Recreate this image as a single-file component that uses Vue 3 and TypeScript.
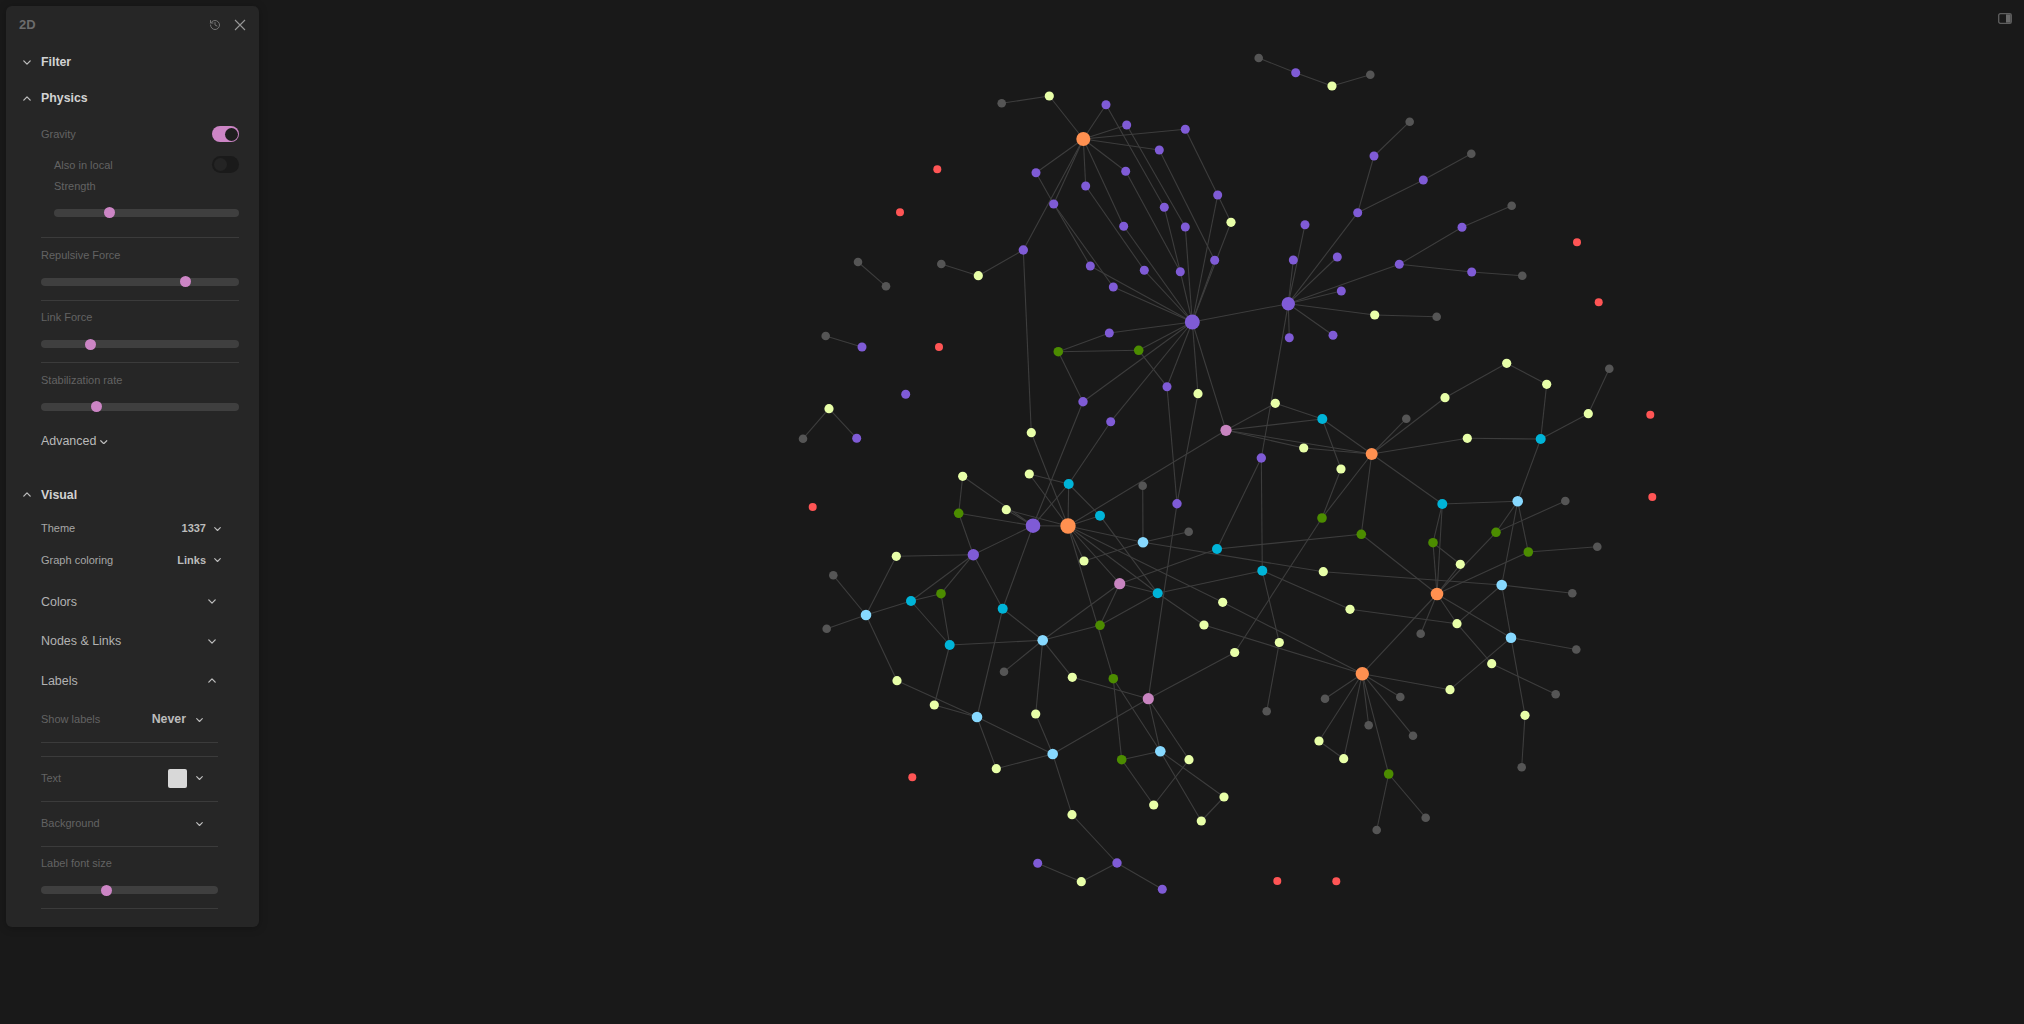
<script setup lang="ts">
interface GNode { id: string; x: number; y: number; r: number; fill: string }
interface GEdge { x1: number; y1: number; x2: number; y2: number }

const fills: Record<string, [string, number]> = {
  p: ['#7f5bd6', 4.5],
  g: ['#555555', 4.3],
  y: ['#e8ffa8', 4.6],
  r: ['#ff5555', 4],
  c: ['#00b4d8', 5],
  l: ['#87d9ff', 5.3],
  v: ['#4c8c00', 4.8],
  m: ['#c884c0', 5.6],
  o: ['#ff9050', 6.5]
}

const nodeTable = `
g1002 1001.7 103.3|y1049 1049.3 96|p1106 1106 104.7|p1127 1126.7 125|p1185 1185.3 129.3|o1083 1083.3 139 7
p1159 1159.3 150|p1036 1036 172.7|p1126 1125.7 171.3|p1086 1085.7 186|p1054 1053.7 204 4.6|p1164 1164.3 207.3
p1186 1185.3 227|p1124 1123.7 226.3|p1023 1023.3 250 4.7|g941 941.3 264|y978 978.3 275.7|g858 858 262|g886 886 286.3
p1090 1090.3 266|p1144 1144.3 270.3|p1180 1180.3 271.7|p1113 1113.3 287|p1192 1192.3 322 7.5|p1109 1109.3 333
v1058 1058.3 351.7|v1139 1138.7 350.3|g826 825.7 336|p862 862 347|r937 937.3 169.3|r900 900 212.3|r939 939 347
g1259 1258.7 58|p1296 1295.7 72.7|y1332 1332 86|g1370 1370.3 74.7|g1410 1409.7 121.7|p1374 1374 156|g1471 1471.3 153.7
p1423 1423.3 180|p1358 1357.7 212.7|p1218 1217.7 195|y1231 1231 222.3|p1305 1305 224.7|g1512 1511.7 205.7|p1462 1462 227.3
r1577 1577 242.3|p1215 1214.7 260.3|p1293 1293.3 260|p1337 1337.3 257|p1399 1399.3 264.3|p1472 1471.7 272|g1522 1522.3 275.7
p1341 1341.3 291|p1288 1288.3 303.7 6.7|y1375 1374.7 315|g1437 1436.7 316.7|r1599 1598.7 302.3|p1289 1289.3 337.7|p1333 1333 335.3
p906 905.7 394.3|y829 829 408.7|g803 803 438.7|p857 856.7 438.3|p1167 1167 386.7|y1198 1198 393.7|p1083 1083 401.7 4.7|p1111 1110.7 421.7
y1031 1031.3 432.7|y963 962.7 476.3|y1029 1029.3 474|c1069 1068.7 484|g1143 1142.7 485.7|p1177 1177 503.7 4.7|r813 812.7 507
y1006 1006.3 509.7|v959 958.7 513.3|c1100 1100 515.7|p1033 1033 525.7 7.3|o1068 1068 526 7.7|g1189 1188.7 531.7|l1143 1143 542.3
p973 973.3 554.7 5.7|y896 896.3 556.3|y1084 1084 561|g833 833.3 575.3|m1120 1119.7 583.7|c1158 1157.7 593.3|v941 941 593.7|c911 911 601
c1003 1002.7 608.7|l866 866 615|v1100 1100 625.3|g827 826.7 628.7|l1043 1042.7 640.3|c950 949.7 645
y1507 1506.7 363.3|g1609 1609.3 368.7|y1547 1546.7 384.3|y1445 1445 397.7|y1275 1275.3 403.3|y1588 1588.3 413.7|r1650 1650.3 414.7
g1406 1406.3 418.7|c1322 1322.3 419|m1226 1226 430.3|y1467 1467.3 438.3|c1541 1540.7 439|y1304 1303.7 448|o1372 1371.7 454 6|p1261 1261.3 458 4.7
y1341 1341 469|r1652 1652.3 497|g1565 1565.3 501|l1518 1517.7 501.3|c1442 1442.3 504|v1322 1322 518|v1361 1361.3 534.3|v1496 1496 532.3
v1433 1433 542.7|g1597 1597.3 546.7|v1528 1528.3 552|y1460 1460.3 564.3|c1217 1217 549|c1262 1262.3 570.7|y1323 1323.3 571.7|l1502 1501.7 585
o1437 1437 594 6.3|g1572 1572.3 593.3|y1223 1222.7 602.3|y1350 1350 609.3|y1457 1457 623.7|y1204 1204 625|g1421 1420.7 633.7|l1511 1511 637.7
y1279 1279.3 642.5|y1235 1234.7 652.5|g1576 1576.3 649.5
g1004 1004 671.7|y1072 1072.3 677.3|y897 897 680.7|v1113 1113.3 678.7|m1148 1148.3 698.7|y934 934.3 705|l977 977 717|y1036 1035.7 714
l1053 1052.7 754|l1160 1160.3 751.3|v1122 1121.7 759.7|y1189 1189 759.7|y996 996.3 768.7|r912 912.3 777.3|y1154 1153.7 805|y1201 1201.3 821
y1071 1072 814.7|p1038 1037.7 863.3|p1117 1117 863 4.7|y1081 1081.3 881.7|p1162 1162.3 889.3
o1362 1362.3 673.7 6.7|y1492 1491.7 663.7|g1325 1325 698.7|g1400 1400.3 697|y1450 1450 689.7|g1556 1555.7 694.3|g1267 1266.7 711.3|y1525 1525 715.3
g1369 1368.7 725.3|g1413 1413 735.7|y1319 1319 741|y1344 1343.7 758.7|g1521 1521.7 767.3|v1389 1388.7 774|y1224 1224 797|g1426 1425.7 817.7
g1377 1376.7 830|r1277 1277.3 881|r1336 1336.3 881.3`

const edgeTable = `
g1002-y1049 y1049-o1083 o1083-p1106 o1083-p1127 o1083-p1185 o1083-p1159 o1083-p1036 o1083-p1126 o1083-p1086 o1083-p1054 o1083-p1023 o1083-p1124
p1106-p1164 p1127-p1186 p1185-p1218 p1159-p1215 p1036-p1054 p1126-p1180 p1086-p1144 p1054-p1090 p1054-p1113 p1164-p1180
p1186-p1192 p1124-p1192 p1090-p1192 p1144-p1192 p1180-p1192 p1113-p1192 p1109-p1192 v1058-p1109 v1058-v1139 v1139-p1192 v1058-p1083
p1023-y978 y978-g941 g858-g886 g826-p862 p1023-y1031 p1218-y1231 y1231-p1192 p1215-p1192 p1218-p1192
p1288-p1305 p1288-p1293 p1288-p1337 p1288-p1358 p1288-p1399 p1288-p1341 p1288-y1375 p1288-p1289 p1288-p1333 p1288-p1192 p1288-p1261
y1375-g1437 p1358-p1374 p1374-g1410 p1358-p1423 p1423-g1471 p1399-p1462 p1462-g1512 p1399-p1472 p1472-g1522
g1259-p1296 p1296-y1332 y1332-g1370
p1192-m1226 p1192-p1083 p1192-p1111 p1192-p1167 p1192-y1198 v1139-p1167 p1083-p1033 p1111-c1069 c1069-p1033
y1031-o1068 o1068-v1113 p1167-p1177 y1198-p1177 p1177-m1148 y963-v959 y963-p1033 y1006-o1068 y1006-p1033
y1029-c1069 y1029-o1068 c1069-o1068 c1069-c1100 c1100-c1158 o1068-c1100 o1068-p1033 v959-p1033 v959-p973 p1033-p973 p1033-c1003
p973-y896 p973-c911 p973-v941 p973-c1003 y896-l866 l866-g833 l866-g827 l866-c911 c911-v941 c911-c950 v941-c950 l866-y897
c950-l1043 c950-y934 c1003-l1043 c1003-l977 l1043-m1120 l1043-v1100 l1043-g1004 l1043-y1036 l1043-y1072 m1120-v1100 m1120-c1158 v1100-c1158
o1068-m1120 o1068-l1143 o1068-c1158 o1068-y1223 y1223-o1362 o1068-y1084 y1084-l1143 l1143-g1143 l1143-g1189 l1143-y1323 o1068-m1226
m1120-c1217 c1158-c1262 c1158-y1204 y1204-o1362 m1148-y1235 y1235-v1322
m1148-y1072 m1148-l1160 m1148-l1053 m1148-y1189 v1113-v1122 v1113-l1160 l1160-y1201 l1160-v1122 l1160-y1224 y1224-y1201 v1122-y1154 y1154-y1189
l977-y897 l977-y934 l977-l1053 l977-y996 y996-l1053 l1053-y1036 l1053-y1071 y1071-p1117 p1117-y1081 y1081-p1038 p1117-p1162
y1275-m1226 y1275-c1322 m1226-c1322 m1226-y1304 m1226-o1372 y1304-o1372 c1322-o1372 c1322-y1341 y1341-v1322 v1322-o1372 o1372-g1406 o1372-y1445
y1445-y1507 y1507-y1547 y1547-c1541 c1541-y1588 y1588-g1609 o1372-y1467 y1467-c1541 c1541-l1518 o1372-c1442 o1372-v1361
l1518-c1442 l1518-v1496 l1518-v1528 l1518-l1502 g1565-v1496 c1442-v1433 c1442-o1437 v1433-o1437 v1433-y1460 y1460-o1437 v1496-o1437 v1528-o1437
v1528-g1597 v1361-o1437 v1361-c1217 c1217-p1261 p1261-c1262 c1262-y1350 c1262-y1279 y1350-y1457 y1323-l1502 l1502-g1572 l1502-y1457 l1502-l1511
o1437-y1457 o1437-l1511 o1437-g1421 o1437-o1362 y1457-y1492 y1492-g1556 l1511-g1576 l1511-y1450 l1511-y1525 y1525-g1521 y1279-g1267
o1362-y1450 o1362-g1325 o1362-g1400 o1362-g1369 o1362-g1413 o1362-y1319 o1362-y1344 o1362-v1389 y1319-y1344 v1389-g1426 v1389-g1377
y829-g803 y829-p857`

const nodes: GNode[] = nodeTable
  .trim()
  .split(/[|\n]/)
  .map((row) => {
    const [id, x, y, r] = row.trim().split(' ')
    const [fill, size] = fills[id[0]]
    return { id, x: Number(x), y: Number(y), r: r ? Number(r) : size, fill }
  })

const byId = new Map(nodes.map((n) => [n.id, n]))

const edges: GEdge[] = edgeTable
  .trim()
  .split(/\s+/)
  .flatMap((pair) => {
    const [a, b] = pair.split('-')
    const from = byId.get(a)
    const to = byId.get(b)
    return from && to ? [{ x1: from.x, y1: from.y, x2: to.x, y2: to.y }] : []
  })

const sliders = {
  strength: 30,
  repulsive: 73,
  link: 25,
  stabilization: 28.1,
  labelSize: 37
}
</script>

<template>
  <div class="app">
    <svg class="graph" viewBox="0 0 2024 1024" width="2024" height="1024">
      <line v-for="(e, i) in edges" :key="i" :x1="e.x1" :y1="e.y1" :x2="e.x2" :y2="e.y2" class="edge" />
      <circle v-for="n in nodes" :key="n.id" :cx="n.x" :cy="n.y" :r="n.r" :fill="n.fill" />
    </svg>

    <svg class="sidebar-toggle" viewBox="0 0 14 11" width="14" height="11">
      <rect x="0.7" y="0.7" width="12.6" height="9.6" rx="1.6" class="sidebar-frame" />
      <rect x="8" y="1.4" width="4.6" height="8.2" class="sidebar-fill" />
    </svg>

    <aside class="panel">
      <header class="head">
        <span class="title">2D</span>
        <span class="head-icons">
          <svg class="history" viewBox="0 0 24 24" width="12" height="12">
            <path d="M3 12a9 9 0 1 0 9-9 9.75 9.75 0 0 0-6.74 2.74L3 8" />
            <path d="M3 3v5h5" />
            <path d="M12 7v5l4 2" />
          </svg>
          <svg class="close" viewBox="0 0 12 12" width="12" height="12">
            <path d="M1 1l10 10M11 1L1 11" />
          </svg>
        </span>
      </header>

      <div class="section-head">
        <svg class="chev" viewBox="0 0 10 6"><path d="M1 1l4 4 4-4" /></svg>
        <span>Filter</span>
      </div>

      <div class="section-head">
        <svg class="chev up" viewBox="0 0 10 6"><path d="M1 1l4 4 4-4" /></svg>
        <span>Physics</span>
      </div>

      <div class="content">
        <div class="row gravity">
          <span class="dim">Gravity</span>
          <span class="toggle on"><i></i></span>
        </div>
        <div class="sub">
          <div class="row local">
            <span class="dim">Also in local</span>
            <span class="toggle off"><i></i></span>
          </div>
          <div class="label-row"><span class="dim">Strength</span></div>
          <div class="slider-row strength">
            <div class="track"><i class="thumb" :style="{ left: sliders.strength + '%' }"></i></div>
          </div>
        </div>
        <div class="rule first"></div>

        <div class="group">
          <div class="label-row"><span class="dim">Repulsive Force</span></div>
          <div class="slider-row">
            <div class="track"><i class="thumb" :style="{ left: sliders.repulsive + '%' }"></i></div>
          </div>
        </div>
        <div class="group">
          <div class="label-row"><span class="dim">Link Force</span></div>
          <div class="slider-row">
            <div class="track"><i class="thumb" :style="{ left: sliders.link + '%' }"></i></div>
          </div>
        </div>
        <div class="group last">
          <div class="label-row"><span class="dim">Stabilization rate</span></div>
          <div class="slider-row">
            <div class="track"><i class="thumb" :style="{ left: sliders.stabilization + '%' }"></i></div>
          </div>
        </div>
        <div class="advanced">
          <span>Advanced</span>
          <svg class="chev small" viewBox="0 0 10 6"><path d="M1 1l4 4 4-4" /></svg>
        </div>
      </div>

      <div class="section-head visual">
        <svg class="chev up" viewBox="0 0 10 6"><path d="M1 1l4 4 4-4" /></svg>
        <span>Visual</span>
      </div>

      <div class="content">
        <div class="select-row">
          <span class="bright">Theme</span>
          <span class="value">1337</span>
          <svg class="chev tiny" viewBox="0 0 10 6"><path d="M1 1l4 4 4-4" /></svg>
        </div>
        <div class="select-row">
          <span class="bright">Graph coloring</span>
          <span class="value">Links</span>
          <svg class="chev tiny" viewBox="0 0 10 6"><path d="M1 1l4 4 4-4" /></svg>
        </div>

        <div class="subhead first-sub">
          <span>Colors</span>
          <svg class="chev" viewBox="0 0 10 6"><path d="M1 1l4 4 4-4" /></svg>
        </div>
        <div class="subhead">
          <span>Nodes &amp; Links</span>
          <svg class="chev" viewBox="0 0 10 6"><path d="M1 1l4 4 4-4" /></svg>
        </div>
        <div class="subhead">
          <span>Labels</span>
          <svg class="chev up" viewBox="0 0 10 6"><path d="M1 1l4 4 4-4" /></svg>
        </div>

        <div class="labels">
          <div class="labels-row show">
            <span class="dim">Show labels</span>
            <span class="never">Never</span>
            <svg class="chev tiny" viewBox="0 0 10 6"><path d="M1 1l4 4 4-4" /></svg>
          </div>
          <div class="blank"></div>
          <div class="labels-row text">
            <span class="dim">Text</span>
            <span class="swatch"></span>
            <svg class="chev tiny" viewBox="0 0 10 6"><path d="M1 1l4 4 4-4" /></svg>
          </div>
          <div class="labels-row background">
            <span class="dim">Background</span>
            <svg class="chev tiny" viewBox="0 0 10 6"><path d="M1 1l4 4 4-4" /></svg>
          </div>
          <div class="group font-size">
            <div class="label-row"><span class="dim">Label font size</span></div>
            <div class="slider-row">
              <div class="track"><i class="thumb" :style="{ left: sliders.labelSize + '%' }"></i></div>
            </div>
          </div>
        </div>
      </div>
    </aside>
  </div>
</template>

<style>
html,
body {
  margin: 0;
  background: #191919;
}
</style>

<style scoped>
.app {
  position: relative;
  width: 2024px;
  height: 1024px;
  overflow: hidden;
  background: #191919;
  font-family: "Liberation Sans", Arial, sans-serif;
  font-size: 11px;
}
.graph {
  position: absolute;
  left: 0;
  top: 0;
}
.edge {
  stroke: #3d3d3d;
  stroke-width: 1.1;
}
.sidebar-toggle {
  position: absolute;
  left: 1998px;
  top: 13px;
}
.sidebar-frame {
  fill: none;
  stroke: #5e5e5e;
  stroke-width: 1.3;
}
.sidebar-fill {
  fill: #6a6a6a;
}
.panel {
  position: relative;
  box-sizing: border-box;
  width: 253px;
  height: 921px;
  margin: 6px;
  overflow: hidden;
  border-radius: 6px;
  background: #262626;
  box-shadow: 0 1px 8px rgba(0, 0, 0, 0.25);
}
.head {
  display: flex;
  align-items: center;
  justify-content: space-between;
  height: 38px;
  padding: 0 13px;
}
.title {
  margin-top: -2px;
  font-size: 13px;
  font-weight: 700;
  color: #6c6c6c;
}
.head-icons {
  display: flex;
  align-items: center;
  gap: 13px;
}
.history {
  fill: none;
  stroke: #757575;
  stroke-width: 2;
  stroke-linecap: round;
  stroke-linejoin: round;
}
.close {
  fill: none;
  stroke: #969696;
  stroke-width: 1.1;
}
.chev {
  width: 8px;
  height: 5px;
  flex: none;
  fill: none;
  stroke: #bdbdbd;
  stroke-width: 1.6;
  stroke-linecap: round;
  stroke-linejoin: round;
}
.chev.up {
  transform: rotate(180deg);
}
.chev.small {
  width: 7.5px;
  height: 4.5px;
  margin-left: 4px;
  margin-top: 2px;
}
.chev.tiny {
  width: 7px;
  height: 4.2px;
  margin-top: 1px;
}
.section-head {
  display: flex;
  align-items: center;
  gap: 10px;
  height: 36px;
  padding-left: 17px;
  font-size: 12.35px;
  font-weight: 700;
  color: #d2d2d2;
}
.section-head.visual {
  margin-top: 19.7px;
}
.content {
  padding: 0 20px 0 35px;
}
.row {
  display: flex;
  align-items: center;
  justify-content: space-between;
}
.gravity {
  height: 36px;
}
.local {
  height: 25px;
}
.sub {
  padding-left: 13px;
}
.dim {
  color: #636363;
}
.bright {
  color: #a6a6a6;
}
.label-row {
  display: flex;
  align-items: center;
  height: 18px;
}
.slider-row {
  display: flex;
  align-items: center;
  height: 36px;
}
.slider-row.strength {
  height: 35px;
}
.track {
  position: relative;
  width: 100%;
  height: 8px;
  border-radius: 4px;
  background: #3f3f3f;
}
.thumb {
  position: absolute;
  top: -1.5px;
  width: 11px;
  height: 11px;
  margin-left: -5.5px;
  border-radius: 50%;
  background: #cc85c5;
}
.toggle {
  position: relative;
  box-sizing: border-box;
  width: 27px;
  height: 16.5px;
  border-radius: 9px;
}
.toggle i {
  position: absolute;
  top: 1.75px;
  width: 13px;
  height: 13px;
  border-radius: 50%;
}
.toggle.on {
  background: #cc85c5;
}
.toggle.on i {
  right: 1.5px;
  background: #1e1e1e;
}
.toggle.off {
  background: #1a1a1a;
}
.toggle.off i {
  left: 1.5px;
  background: #242424;
}
.rule {
  height: 1px;
  background: #3b3b3b;
}
.rule.first {
  margin-top: 7px;
}
.group {
  padding-top: 7.5px;
  border-bottom: 1px solid #3b3b3b;
}
.group.last {
  border-bottom: none;
}
.advanced {
  display: flex;
  align-items: center;
  height: 32.5px;
  font-size: 12.45px;
  color: #b9b9b9;
}
.select-row {
  display: flex;
  align-items: center;
  height: 31.5px;
  padding-right: 18px;
}
.select-row .bright {
  flex: 1;
}
.value {
  margin-right: 8px;
  font-weight: 700;
  color: #bcbcbc;
}
.subhead {
  display: flex;
  align-items: center;
  justify-content: space-between;
  height: 39.5px;
  padding-right: 23px;
  font-size: 12.45px;
  color: #b2b2b2;
}
.subhead.first-sub {
  margin-top: 6.5px;
}
.labels {
  width: 177px;
}
.labels-row {
  display: flex;
  align-items: center;
  padding-right: 15px;
}
.labels-row .dim {
  flex: 1;
}
.show {
  box-sizing: content-box;
  height: 37.3px;
  padding-bottom: 4.5px;
  border-bottom: 1px solid #3b3b3b;
}
.show .chev {
  margin-top: 2px;
}
.never {
  margin-right: 10px;
  font-size: 12.35px;
  font-weight: 700;
  color: #bcbcbc;
}
.blank {
  height: 13px;
  border-bottom: 1px solid #3b3b3b;
}
.text {
  height: 41px;
  padding-bottom: 3px;
  border-bottom: 1px solid #3b3b3b;
}
.swatch {
  width: 19px;
  height: 19px;
  margin-top: 1.5px;
  margin-right: 9px;
  border-radius: 2px;
  background: #d8d8d8;
}
.background {
  height: 41.5px;
  padding-bottom: 2px;
  border-bottom: 1px solid #3b3b3b;
}
.font-size {
  padding-top: 7.3px;
}
</style>
